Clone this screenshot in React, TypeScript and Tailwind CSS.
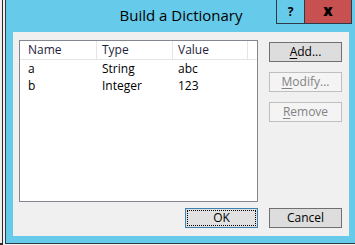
import React from "react";

const font = { fontFamily: '"Segoe UI", "Open Sans", "Noto Sans", sans-serif' };

function Btn({ label, u, rest, disabled, def }: { label: string; u: string; rest: string; disabled?: boolean; def?: boolean }) {
  if (disabled) {
    return (
      <div className="w-[73px] h-[20px] border border-[#bfbfbf] bg-[#f4f4f4] text-[#838383] flex items-center justify-center text-[12px] leading-none">
        <span><span className="underline underline-offset-2">{u}</span>{rest}</span>
      </div>
    );
  }
  if (def) {
    return (
      <div className="w-[73px] h-[20px] border border-[#3c7fb1] bg-[#e1e1e1] p-[1px]">
        <div className="w-full h-full border border-dotted border-black flex items-center justify-center text-[12px] leading-none text-black">
          <span className="-mt-[1px]">{label}</span>
        </div>
      </div>
    );
  }
  return (
    <div className="w-[73px] h-[20px] border border-[#707070] bg-[#dddddd] text-black flex items-center justify-center text-[12px] leading-none">
      <span>{u ? <span className="underline underline-offset-2">{u}</span> : null}{rest}</span>
    </div>
  );
}

export default function App() {
  const rows = [
    ["a", "String", "abc"],
    ["b", "Integer", "123"],
  ];
  return (
    <div className="relative w-[355px] h-[245px] overflow-hidden bg-[#f0f0f0]" style={font}>
      <div className="absolute left-[2px] top-0 w-[1px] h-[243px] bg-[#2b2b2b]" />
      <div className="absolute left-0 top-[243px] w-[3px] h-[2px] bg-[#2b2b2b]" />
      <div className="absolute left-[5px] top-[-1px] w-[352px] h-[245px] border border-[#2e3a45] bg-[#66cbea] flex flex-col">
        <div className="relative h-[32px] shrink-0 flex items-start justify-center">
          <span className="mt-[6px] text-[15px] font-normal text-black leading-[18px]">Build a Dictionary</span>
          <div className="absolute left-[270px] top-0 w-[29px] h-[24px] border border-t-0 border-[#2e3a45] bg-[#66cbea] flex items-center justify-center text-[12px] font-bold text-black">?</div>
          <div className="absolute left-[298px] top-0 w-[48px] h-[24px] border border-t-0 border-[#2e3a45] bg-[#c75050] flex items-center justify-center text-[15px] font-extrabold text-black leading-none">
            <span className="-mt-[3px]">x</span>
          </div>
        </div>
        <div className="ml-[7px] w-[336px] h-[204px] bg-[#f0f0f0] pt-[8px] pl-[6px] flex flex-col">
          <div className="flex gap-[11px]">
            <div className="w-[239px] h-[162px] border border-[#828790] bg-white">
              <div className="flex h-[19px] border-b border-[#e5e5e5] text-[12px] text-[#1e1e3c] leading-[18px]">
                <div className="w-[77px] pl-[8px] border-r border-[#e5e5e5]">Name</div>
                <div className="w-[76px] pl-[5px] border-r border-[#e5e5e5]">Type</div>
                <div className="w-[75px] pl-[5px] border-r border-[#e5e5e5]">Value</div>
              </div>
              {rows.map((r) => (
                <div key={r[0]} className="flex h-[17px] text-[12px] text-black leading-[17px]">
                  <div className="w-[77px] pl-[8px]">{r[0]}</div>
                  <div className="w-[76px] pl-[5px]">{r[1]}</div>
                  <div className="w-[75px] pl-[5px]">{r[2]}</div>
                </div>
              ))}
            </div>
            <div className="flex flex-col gap-[10px] pt-[2px]">
              <Btn label="Add..." u="A" rest="dd..." />
              <Btn label="Modify..." u="M" rest="odify..." disabled />
              <Btn label="Remove" u="R" rest="emove" disabled />
            </div>
          </div>
          <div className="flex gap-[11px] mt-[6px] pl-[166px]">
            <Btn label="OK" u="" rest="OK" def />
            <Btn label="Cancel" u="" rest="Cancel" />
          </div>
        </div>
      </div>
    </div>
  );
}
